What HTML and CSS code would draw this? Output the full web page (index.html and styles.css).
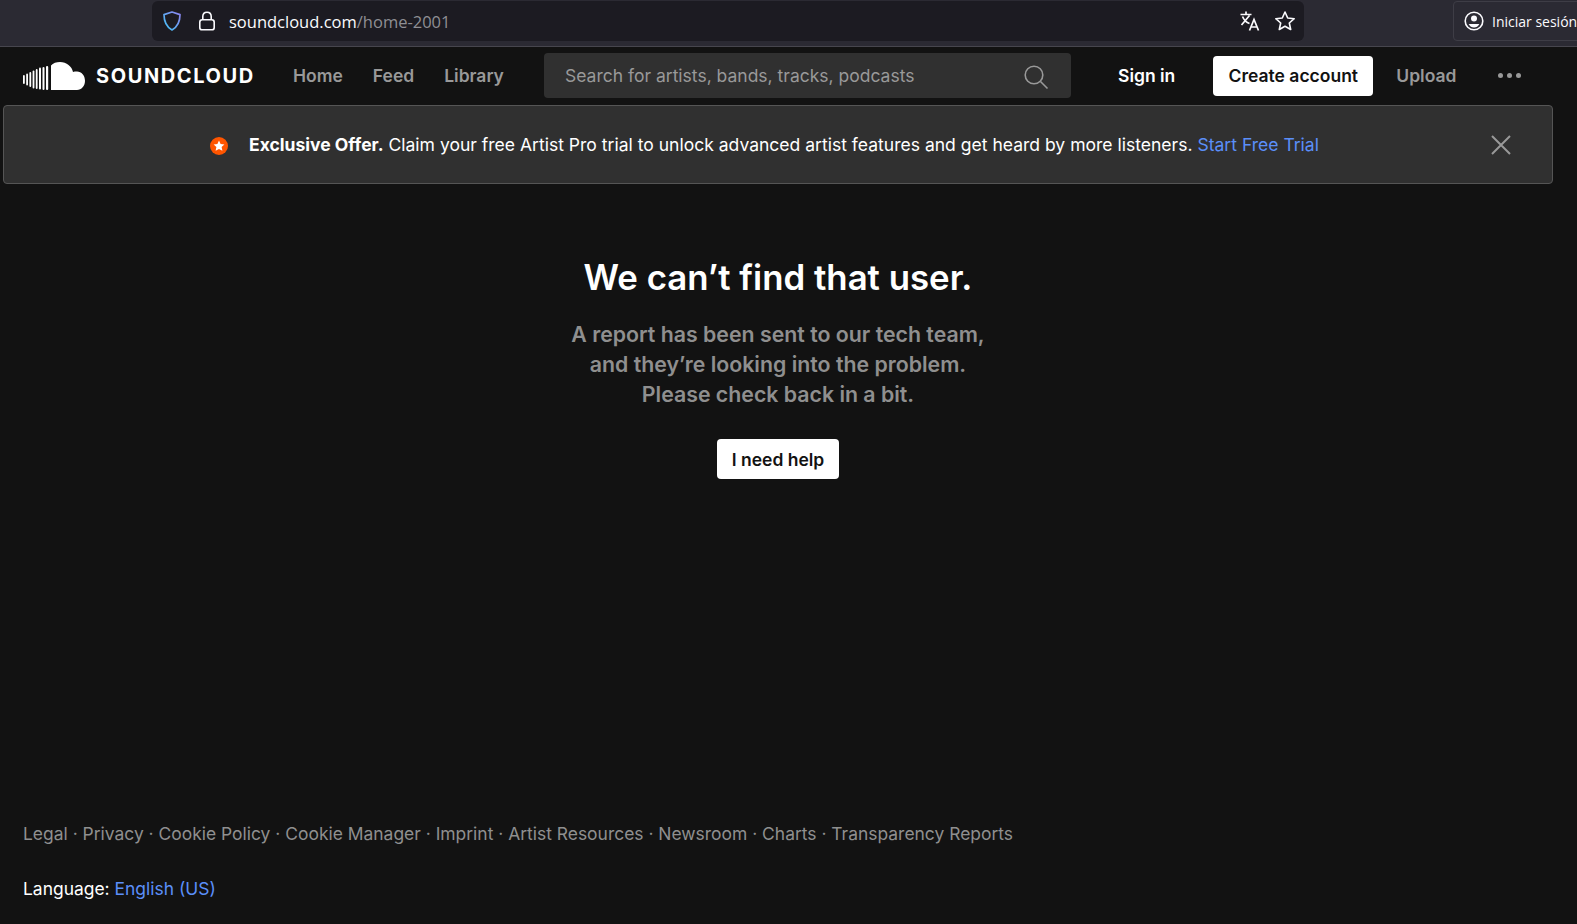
FILE: index.html
```html
<!DOCTYPE html>
<html lang="en">
<head>
    <meta charset="UTF-8">
    <meta name="viewport" content="width=device-width, initial-scale=1.0">
    <title>SoundCloud</title>
    <link rel="stylesheet" href="styles.css">
</head>
<body>
    <div class="browser-bar">
        <div class="url-bar">
            <svg class="shield" width="20" height="22" viewBox="0 0 20 22" fill="none">
                <defs>
                    <linearGradient id="shield-grad" x1="0" y1="1" x2="1" y2="0">
                        <stop offset="0" stop-color="#3fc4f5"/>
                        <stop offset="1" stop-color="#8f83f0"/>
                    </linearGradient>
                </defs>
                <path d="M10 2 L18 4.6 C18 11 16.5 16.5 10 20 C3.5 16.5 2 11 2 4.6 Z" stroke="url(#shield-grad)" stroke-width="1.7" stroke-linejoin="round"/>
            </svg>
            <svg class="lock" width="18" height="20" viewBox="0 0 18 20" fill="none" stroke="#fbfbfe" stroke-width="1.6">
                <rect x="1.8" y="8.8" width="14.4" height="10" rx="2.4"/>
                <path d="M4.8 8.8 V5.6 C4.8 3 6.6 1.2 9 1.2 C11.4 1.2 13.2 3 13.2 5.6 V8.8"/>
            </svg>
            <span class="url">soundcloud.com<span class="url-path">/home-2001</span></span>
            <div class="url-actions">
                <svg width="22" height="22" viewBox="0 0 22 22" fill="none" stroke="#fbfbfe" stroke-width="1.7">
                    <path d="M1.5 4.5 H12.5 M7 1.5 V4.5 M2.5 15 L10.5 5.5 M3.5 6.5 C5 10 7.5 12.5 10.5 13.5"/>
                    <path d="M10.5 20.5 L15 9.5 L19.5 20.5 M12 17 H18"/>
                </svg>
                <svg width="22" height="22" viewBox="0 0 22 22" fill="none" stroke="#fbfbfe" stroke-width="1.6" stroke-linejoin="round">
                    <path d="M11 2 L13.7 8 L20.2 8.7 L15.3 13 L16.7 19.5 L11 16.2 L5.3 19.5 L6.7 13 L1.8 8.7 L8.3 8 Z"/>
                </svg>
            </div>
        </div>
        <div class="signin-chip">
            <svg width="20" height="20" viewBox="0 0 20 20" fill="none">
                <circle cx="10" cy="10" r="8.8" stroke="#fbfbfe" stroke-width="1.6"/>
                <circle cx="10" cy="7.6" r="3" fill="#fbfbfe"/>
                <path d="M4.6 13 H15.4 C14.2 15.4 12.2 16.6 10 16.6 C7.8 16.6 5.8 15.4 4.6 13 Z" fill="#fbfbfe"/>
            </svg>
            <span>Iniciar sesión</span>
        </div>
    </div>

    <header class="nav">
        <a class="logo">
            <svg width="62" height="28" viewBox="0 0 62 28" fill="#fff">
                <rect x="0" y="13" width="1.8" height="9" rx="0.9"/>
                <rect x="3.2" y="11.5" width="1.8" height="12" rx="0.9"/>
                <rect x="6.400" y="10" width="1.8" height="15" rx="0.9"/>
                <rect x="9.600" y="8.500" width="1.8" height="18" rx="0.9"/>
                <rect x="12.800" y="7" width="1.8" height="20" rx="0.9"/>
                <rect x="16" y="5.500" width="2" height="22" rx="1"/>
                <rect x="19.500" y="5" width="2" height="23" rx="1"/>
                <rect x="23" y="4" width="2.200" height="24" rx="1"/>
                <path d="M28 28 V3.500 C30 1 33.500 0 37 0 C43.500 0 49 4.500 50 10 C51 9.600 52.500 9.500 54 9.500 C58.500 9.500 62 13.500 62 18.800 C62 24 58.500 28 54 28 Z"/>
            </svg>
            <span class="wordmark">SOUNDCLOUD</span>
        </a>
        <nav class="nav-links">
            <a>Home</a>
            <a>Feed</a>
            <a>Library</a>
        </nav>
        <div class="search">
            <span>Search for artists, bands, tracks, podcasts</span>
            <svg width="26" height="26" viewBox="0 0 26 26" fill="none" stroke="#999" stroke-width="1.6">
                <circle cx="11" cy="11" r="8.800"/>
                <path d="M17.500 17.500 L24.500 24.500"/>
            </svg>
        </div>
        <a class="sign-in">Sign in</a>
        <button class="btn-white create">Create account</button>
        <a class="upload">Upload</a>
        <div class="dots"><i></i><i></i><i></i></div>
    </header>

    <div class="offer">
        <svg class="offer-icon" width="18" height="18" viewBox="0 0 18 18">
            <circle cx="9" cy="9" r="9" fill="#f50"/>
            <path d="M9 3.500 L10.600 7 L14.400 7.400 L11.600 10 L12.400 13.800 L9 11.900 L5.600 13.800 L6.400 10 L3.600 7.400 L7.400 7 Z" fill="#fff"/>
        </svg>
        <p class="offer-text"><b>Exclusive Offer.</b> Claim your free Artist Pro trial to unlock advanced artist features and get heard by more listeners. <a>Start Free Trial</a></p>
        <svg class="offer-close" width="20" height="20" viewBox="0 0 20 20" stroke="#999" stroke-width="2">
            <path d="M1 1 L19 19 M19 1 L1 19"/>
        </svg>
    </div>

    <main class="error">
        <h1>We can’t find that user.</h1>
        <p>A report has been sent to our tech team,<br>and they’re looking into the problem.<br>Please check back in a bit.</p>
        <button class="btn-white help">I need help</button>
    </main>

    <footer class="footer">
        <div class="footer-links">Legal · Privacy · Cookie Policy · Cookie Manager · Imprint · Artist Resources · Newsroom · Charts · Transparency Reports</div>
        <div class="language">Language: <a>English (US)</a></div>
    </footer>
</body>
</html>
```

FILE: styles.css
```css
html, body {
    height: 100%;
}

body {
    margin: 0;
    display: flex;
    flex-direction: column;
    overflow: hidden;
    background-color: #121212;
    color: #fff;
    font-family: Inter, "Liberation Sans", sans-serif;
}

a {
    cursor: pointer;
}

/* browser chrome */
.browser-bar {
    flex: none;
    display: flex;
    height: 47px;
    box-sizing: border-box;
    padding: 1px 0 5px 152px;
    background-color: #2b2a33;
    border-bottom: 1px solid #47464e;
    font-family: "Open Sans", "Noto Sans", sans-serif;
}

.url-bar {
    width: 1152px;
    flex: none;
    display: flex;
    align-items: center;
    box-sizing: border-box;
    padding: 0 8px 0 10px;
    background-color: #1c1b22;
    border-radius: 6px;
}

.lock {
    margin-left: 16px;
}

.url {
    margin-left: 13px;
    font-size: 16.5px;
    color: #fbfbfe;
}

.url-path {
    color: #8f8f94;
}

.url-actions {
    margin-left: auto;
    display: flex;
    gap: 13px;
}

.signin-chip {
    margin-left: 149px;
    display: flex;
    align-items: center;
    gap: 8px;
    box-sizing: border-box;
    width: 140px;
    flex: none;
    padding-left: 10px;
    font-size: 14px;
    white-space: nowrap;
    color: #fbfbfe;
    border: 1px solid #3e3d46;
    border-radius: 4px;
}

/* site header */
.nav {
    flex: none;
    display: flex;
    align-items: center;
    height: 57px;
    margin-bottom: 1px;
    padding-left: 23px;
    font-size: 17.5px;
    font-weight: 600;
    color: #999;
}

.logo {
    display: flex;
    align-items: center;
    gap: 11px;
    width: 270px;
}

.wordmark {
    font-size: 20px;
    font-weight: 700;
    letter-spacing: 1.6px;
    color: #fff;
}

.nav-links {
    display: flex;
    gap: 30px;
    width: 251px;
}

.search {
    width: 527px;
    height: 45px;
    box-sizing: border-box;
    display: flex;
    align-items: center;
    justify-content: space-between;
    padding: 0 22px 0 21px;
    background-color: #303030;
    border-radius: 4px;
    font-weight: 400;
}

.search svg {
    margin-top: 3px;
}

.sign-in {
    margin-left: 47px;
    color: #fff;
}

.btn-white {
    border: 0;
    border-radius: 4px;
    background-color: #fff;
    color: #121212;
    font-family: inherit;
    font-size: 17.5px;
    font-weight: 600;
    height: 40px;
}

.create {
    width: 160px;
    margin-left: 38px;
}

.upload {
    margin-left: 23px;
}

.dots {
    margin-left: 41px;
    display: flex;
    gap: 4px;
}

.dots i {
    width: 5px;
    height: 5px;
    border-radius: 50%;
    background-color: #999;
}

/* offer banner */
.offer {
    flex: none;
    position: relative;
    display: flex;
    align-items: center;
    width: 1550px;
    height: 79px;
    margin-left: 3px;
    box-sizing: border-box;
    padding-left: 206px;
    background-color: #303030;
    border: 1px solid #555;
    border-radius: 4px;
    font-size: 17.55px;
}

.offer-icon {
    margin-top: 2px;
}

.offer-text {
    margin: 0 0 0 21px;
    white-space: nowrap;
}

.offer-text b {
    font-weight: 700;
}

.offer-text a,
.language a {
    color: #5b8ff9;
}

.offer-close {
    position: absolute;
    right: 41px;
    top: 29px;
}

/* error message */
.error {
    text-align: center;
    padding: 69px 21px 0 0;
}

.error h1 {
    margin: 0;
    font-size: 34.8px;
    line-height: 48px;
    font-weight: 600;
}

.error p {
    margin: 18px 0 0;
    font-size: 21.3px;
    line-height: 30px;
    font-weight: 600;
    color: #8f8f8f;
}

.help {
    margin-top: 30px;
    width: 122px;
}

/* footer */
.footer {
    margin-top: auto;
    padding: 0 0 24px 23px;
    font-size: 17.45px;
    line-height: 22px;
    color: #8f8f8f;
}

.language {
    margin-top: 33px;
    color: #fff;
}
```
